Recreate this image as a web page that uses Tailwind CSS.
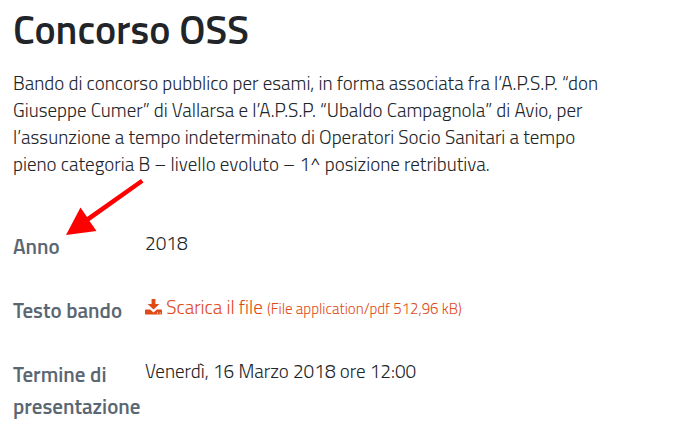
<!DOCTYPE html>
<html lang="it">
<head>
<meta charset="utf-8">
<meta name="viewport" content="width=device-width, initial-scale=1">
<title>Concorso OSS</title>
<script src="https://cdn.jsdelivr.net/npm/@tailwindcss/browser@4"></script>
</head>
<body class="bg-white font-['Titillium_Web','Roboto',sans-serif] text-[19px] leading-[27px] font-light text-[#212529]">
<main class="relative px-[13px]">
  <h1 class="text-[40px] leading-[60px] font-semibold">Concorso OSS</h1>
  <p class="mt-[9px] max-w-[600px]">Bando di concorso pubblico per esami, in forma associata fra l’A.P.S.P. “don Giuseppe Cumer” di Vallarsa e l’A.P.S.P. “Ubaldo Campagnola” di Avio, per l’assunzione a tempo indeterminato di Operatori Socio Sanitari a tempo pieno categoria B – livello evoluto – 1^ posizione retributiva.</p>
  <dl class="mt-[52px] grid grid-cols-[132px_1fr] gap-y-[31px]">
    <dt class="pt-px text-[21px] leading-8 font-semibold text-[#5a6772]">Anno</dt>
    <dd>2018</dd>
    <dt class="pt-px text-[21px] leading-8 font-semibold text-[#5a6772]">Testo bando</dt>
    <dd>
      <a href="#" class="text-[#e04a17]"><svg class="inline-block h-4 w-[17px] align-[-1px]" viewBox="0 0 16 16" preserveAspectRatio="none" fill="currentColor" aria-hidden="true"><path d="M6.200 0h3.600v5h3.700L8 10.500 2.500 5h3.700z"/><path fill-rule="evenodd" d="M.8 10.500H4.800l3.200 3 3.200-3h4q.8 0 .8.800v3.400q0 .8-.8.800H.8q-.8 0-.8-.8v-3.400Q0 10.500 .8 10.500zM11.300 13.500v1h1v-1zm2.500 0v1h1v-1z"/></svg> Scarica il file <small class="text-[15px]">(File application/pdf 512,96 kB)</small></a>
    </dd>
    <dt class="pt-px text-[21px] leading-8 font-semibold text-[#5a6772]">Termine di presentazione</dt>
    <dd>Venerdì, 16 Marzo 2018 ore 12:00</dd>
  </dl>
  <svg class="absolute top-[178px] left-[64px] h-[60px] w-[82px]" viewBox="64 178 82 60" fill="#ff0000" aria-hidden="true"><path d="M141 179L143.500 182.500L89.500 221L96.500 231L66 235L80.500 207.500L87 217Z"/></svg>
</main>
</body>
</html>
